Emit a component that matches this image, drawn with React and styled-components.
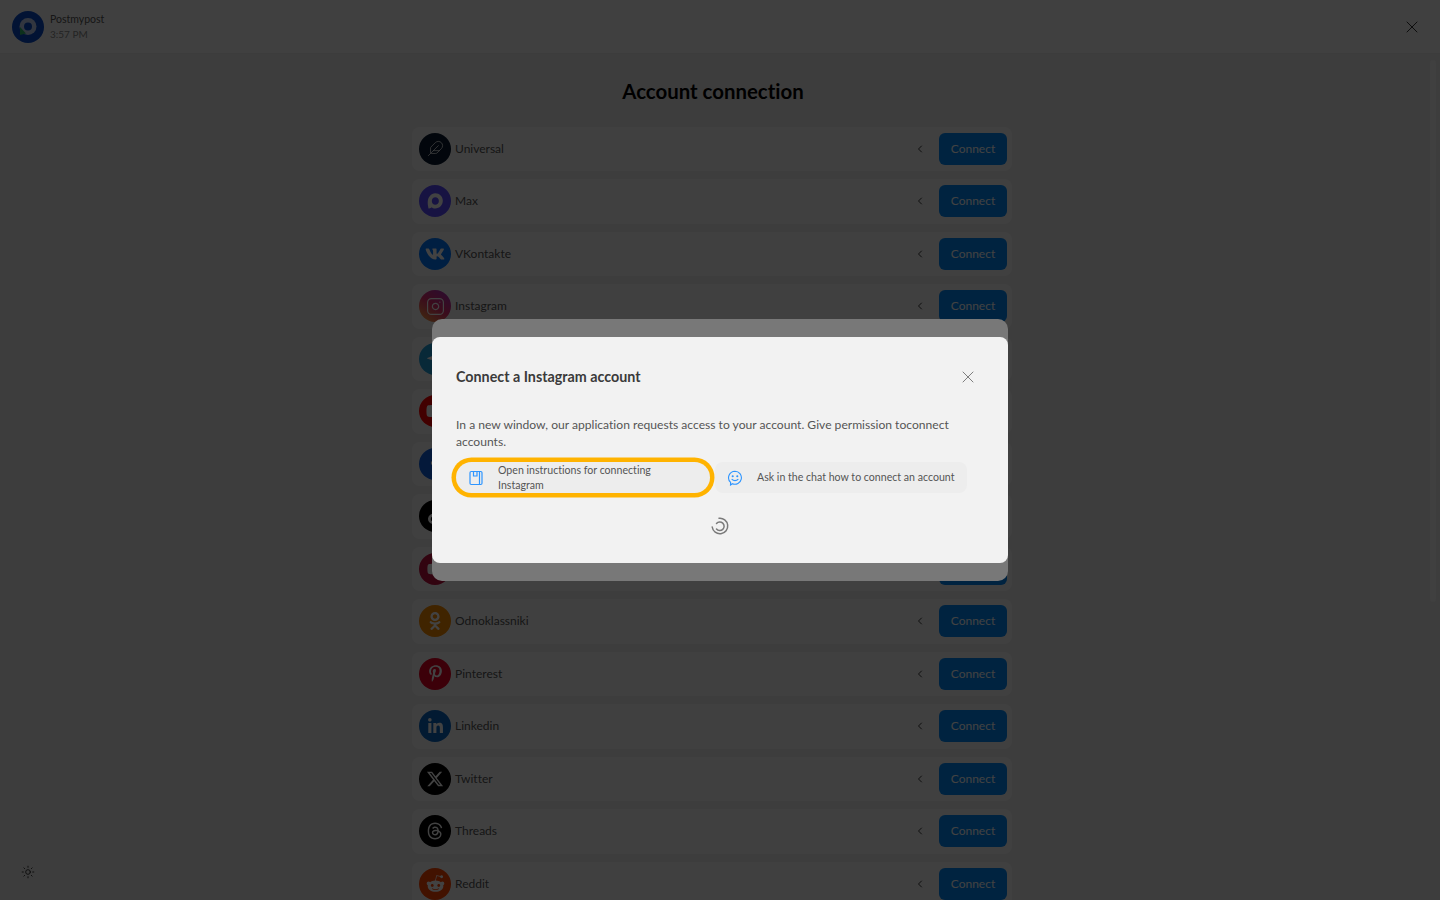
import React from 'react';
import styled, { createGlobalStyle } from 'styled-components';
import { Feather, ChevronLeft, X, Sun, Instagram } from 'lucide-react';
import {
    FaVk, FaTelegramPlane, FaYoutube, FaFacebookF, FaTiktok, FaOdnoklassniki,
    FaPinterestP, FaLinkedinIn, FaRedditAlien,
} from 'react-icons/fa';
import { FaXTwitter, FaThreads } from 'react-icons/fa6';

const GlobalStyle = createGlobalStyle`
  html, body { margin: 0; height: 100%; overflow: hidden; }
  body { font-family: Lato, "Open Sans", sans-serif; font-variant-ligatures: none; background: #ececec; color: #1f1f1f; }
  * { box-sizing: border-box; }
`;

const Page = styled.div`
  height: 100vh;
  display: flex;
  flex-direction: column;
  overflow: hidden;
`;

const Header = styled.header`
  height: 54px;
  flex: none;
  display: flex;
  align-items: center;
  justify-content: space-between;
  padding: 0 18px 0 12px;
  background: #f8f8f8;
  border-bottom: 1px solid #e8e8e8;
`;

const Chat = styled.div`
  display: flex;
  align-items: center;
  gap: 6px;
`;

const ChatText = styled.div`
  display: flex;
  flex-direction: column;
  font-size: 10.5px;
  line-height: 15px;
`;

const ChatName = styled.span`
  color: #555;
`;

const ChatTime = styled.span`
  color: #888;
  font-size: 10px;
`;

const HeaderClose = styled.button`
  border: none;
  background: none;
  padding: 0;
  display: flex;
  color: #222;
`;

const Main = styled.main`
  flex: 1;
  min-height: 0;
  overflow: hidden;
  padding: 24px 16px 0 0;
  display: flex;
  flex-direction: column;
  align-items: center;
`;

const Title = styled.h1`
  margin: 0 0 20.5px 2px;
  font-size: 20.4px;
  line-height: 27px;
  padding-bottom: 1px;
  font-weight: 700;
  color: #000;
`;

const List = styled.div`
  width: 600px;
  display: flex;
  flex-direction: column;
  gap: 8px;
  flex: none;
`;

const Row = styled.div`
  height: 44.5px;
  flex: none;
  display: flex;
  align-items: center;
  padding: 0 5px 0 7px;
  background: #f8f8f8;
  border-radius: 8px;
`;

const Round = styled.span`
  width: 32px;
  height: 32px;
  flex: none;
  border-radius: 50%;
  display: flex;
  align-items: center;
  justify-content: center;
  color: #fff;
  background: ${p => p.$bg};
`;

const RowName = styled.span`
  margin-left: 4px;
  flex: 1;
  font-size: 12px;
  line-height: 15px;
  padding-bottom: 1px;
  color: #555;
`;

const Chevron = styled.span`
  display: flex;
  margin-right: 13px;
  color: #222;
`;

const ConnectButton = styled.button`
  width: 68px;
  height: 32px;
  border: none;
  border-radius: 6px;
  background: #0087f5;
  color: #fff;
  font: inherit;
  font-size: 12px;
  padding: 0 0 1px;
`;

const ThemeToggle = styled.span`
  position: fixed;
  left: 21px;
  bottom: 21px;
  display: flex;
  color: #222;
`;

const Scrollbar = styled.span`
  position: fixed;
  right: 4px;
  top: 60px;
  width: 6px;
  height: 542px;
  border-radius: 3px;
  background: #fdfdfd;
  opacity: 0.5;
`;

const Overlay = styled.div`
  position: fixed;
  inset: 0;
  background: rgba(0, 0, 0, 0.74);
  display: flex;
  align-items: center;
  justify-content: center;
`;

const ModalShell = styled.div`
  width: 576px;
  padding: 18px 0;
  border-radius: 10px;
  background: #787878;
`;

const Modal = styled.div`
  height: 226px;
  padding: 24px;
  border-radius: 8px;
  background: #f2f2f2;
  display: flex;
  flex-direction: column;
`;

const ModalHead = styled.div`
  height: 32px;
  display: flex;
  align-items: center;
  justify-content: space-between;
  margin-bottom: 23px;
`;

const ModalTitle = styled.h2`
  margin: 0 0 1px;
  font-size: 14.3px;
  line-height: 18px;
  font-weight: 700;
  color: #3a3a3a;
`;

const ModalClose = styled.button`
  border: none;
  background: none;
  padding: 0;
  margin-right: 6px;
  display: flex;
  color: #666;
`;

const Description = styled.p`
  margin: 0 0 12px;
  font-size: 12.1px;
  line-height: 17px;
  color: #555;
`;

const Actions = styled.div`
  display: flex;
  gap: 5px;
`;

const Action = styled.a`
  display: flex;
  align-items: center;
  gap: 14px;
  height: 31px;
  padding: 0 12px;
  width: ${p => p.$width}px;
  font-size: 10.6px;
  line-height: 15px;
  color: #555;
  background: #ededed;
  border-radius: ${p => (p.$ring ? '16px' : '8px')};
  box-shadow: ${p => (p.$ring ? '0 0 0 4.5px #ffb300' : 'none')};
`;

const ActionLabel = styled.span`
  flex: 1;
  max-width: ${p => p.$wrap || 'none'};
  white-space: ${p => (p.$wrap ? 'normal' : 'nowrap')};
`;

const Loader = styled.div`
  margin-top: 24px;
  display: flex;
  justify-content: center;
`;

const MaxLogo = () => (
    <svg width="20" height="20" viewBox="0 0 20 20">
        <path
            fill="#fff"
            fillRule="evenodd"
            d="M10.2 2.2c4.4 0 7.6 3.3 7.6 7.6s-3.3 7.7-7.6 7.7c-1.7 0-2.6-.4-3.6-1.2-.6.8-2.4 1.4-3.2.9 0-1.300-.7-2.900-.7-5.700 0-5.300 3.400-9.300 7.500-9.300zm.1 4c-2 0-3.500 1.500-3.500 3.700 0 2.100 1.500 3.800 3.400 3.800 2 0 3.700-1.700 3.700-3.800 0-2.100-1.600-3.700-3.600-3.700z"
        />
    </svg>
);

const PostLogo = () => (
    <svg width="32" height="32" viewBox="0 0 32 32">
        <circle cx="16" cy="16" r="16" fill="#0a4cc8" />
        <circle cx="16" cy="15.500" r="8.500" fill="#fff" opacity="0.75" />
        <circle cx="16" cy="15.500" r="4" fill="#0a4cc8" />
        <path d="M8 16v8l6-1.500z" fill="#2fb86b" />
    </svg>
);

const BookIcon = () => (
    <svg width="16" height="16" viewBox="0 0 16 16" fill="none" stroke="#2e95ff" strokeWidth="1.200">
        <rect x="2" y="1.500" width="12" height="13" rx="1.200" />
        <path d="M11.500 1.500v13M5.500 1.500v4.500h3.500V1.500" />
    </svg>
);

const SmileIcon = () => (
    <svg width="16" height="16" viewBox="0 0 16 16" fill="none" stroke="#2e95ff" strokeWidth="1.100" strokeLinecap="round">
        <path d="M8 1.200a6.500 6.500 0 1 1-2.600 12.500L3.500 15l.1-2.600A6.500 6.500 0 0 1 8 1.200z" />
        <path d="M5 9.300c1.500 1.700 4.500 1.700 6 0" />
        <circle cx="5.700" cy="6.300" r=".5" fill="#2e95ff" />
        <circle cx="10.300" cy="6.300" r=".5" fill="#2e95ff" />
    </svg>
);

const Spinner = () => (
    <svg width="18" height="18" viewBox="0 0 18 18" fill="none" stroke="#7a7a7a" strokeWidth="1.500" strokeLinecap="round">
        <path d="M8 1.200a7.800 7.800 0 1 1-6.800 8.800" />
        <path d="M5.500 6.500a4.300 4.300 0 1 1 0 5.500" />
    </svg>
);

const accounts = [
    { name: 'Universal', bg: '#0a1a30', icon: <Feather size={17} strokeWidth={1} /> },
    { name: 'Max', bg: '#5a4cff', icon: <MaxLogo /> },
    { name: 'VKontakte', bg: '#0077ff', icon: <FaVk size={20} /> },
    { name: 'Instagram', bg: 'linear-gradient(35deg, #f9a03c 5%, #e1306c 50%, #a32fc0 100%)', icon: <Instagram size={19} strokeWidth={1.5} /> },
    { name: 'Telegram', bg: '#229ed9', icon: <FaTelegramPlane size={18} /> },
    { name: 'YouTube', bg: '#ff0000', icon: <FaYoutube size={18} /> },
    { name: 'Facebook', bg: '#1060e0', icon: <FaFacebookF size={17} /> },
    { name: 'TikTok', bg: '#000', icon: <FaTiktok size={16} /> },
    { name: 'Rutube', bg: '#c01040', icon: <FaYoutube size={16} /> },
    { name: 'Odnoklassniki', bg: '#f58a00', icon: <FaOdnoklassniki size={18} /> },
    { name: 'Pinterest', bg: '#e60023', icon: <FaPinterestP size={17} /> },
    { name: 'Linkedin', bg: '#0a66c2', icon: <FaLinkedinIn size={17} /> },
    { name: 'Twitter', bg: '#000', icon: <FaXTwitter size={18} /> },
    { name: 'Threads', bg: '#000', icon: <FaThreads size={18} /> },
    { name: 'Reddit', bg: '#ff4500', icon: <FaRedditAlien size={19} /> },
];

function App() {
    return (
        <>
            <GlobalStyle />
            <Page>
                <Header>
                    <Chat>
                        <PostLogo />
                        <ChatText>
                            <ChatName>Postmypost</ChatName>
                            <ChatTime>3:57 PM</ChatTime>
                        </ChatText>
                    </Chat>
                    <HeaderClose><X size={20} strokeWidth={1.1} /></HeaderClose>
                </Header>
                <Main>
                    <Title>Account connection</Title>
                    <List>
                        {accounts.map(account => (
                            <Row key={account.name}>
                                <Round $bg={account.bg}>{account.icon}</Round>
                                <RowName>{account.name}</RowName>
                                <Chevron><ChevronLeft size={12} strokeWidth={1.8} /></Chevron>
                                <ConnectButton>Connect</ConnectButton>
                            </Row>
                        ))}
                    </List>
                </Main>
                <Scrollbar />
                <ThemeToggle><Sun size={14} strokeWidth={1.5} /></ThemeToggle>
            </Page>
            <Overlay>
                <ModalShell>
                    <Modal>
                        <ModalHead>
                            <ModalTitle>Connect a Instagram account</ModalTitle>
                            <ModalClose><X size={20} strokeWidth={1} /></ModalClose>
                        </ModalHead>
                        <Description>
                            In a new window, our application requests access to your account. Give permission toconnect accounts.
                        </Description>
                        <Actions>
                            <Action $ring $width={254}>
                                <BookIcon />
                                <ActionLabel $wrap="165px">Open instructions for connecting Instagram</ActionLabel>
                            </Action>
                            <Action $width={252}>
                                <SmileIcon />
                                <ActionLabel>Ask in the chat how to connect an account</ActionLabel>
                            </Action>
                        </Actions>
                        <Loader><Spinner /></Loader>
                    </Modal>
                </ModalShell>
            </Overlay>
        </>
    );
}

export default App;
